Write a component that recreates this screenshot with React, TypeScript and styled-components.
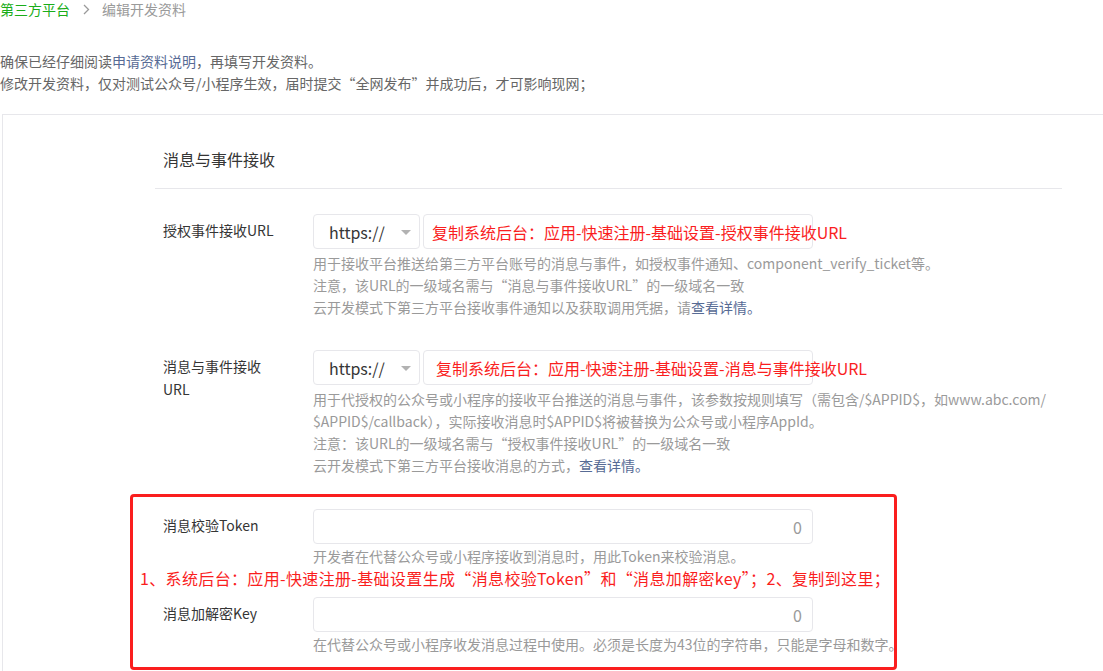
import React from "react";
import styled, { createGlobalStyle } from "styled-components";

const Global = createGlobalStyle`
  html, body { margin: 0; padding: 0; background: #fff; overflow: hidden; }
  body { font-family: "Noto Sans CJK SC", "Noto Sans", sans-serif; color: #353535; }
  * { box-sizing: border-box; }
`;

const Page = styled.div`
  width: 1103px;
  height: 671px;
  overflow: hidden;
`;

const Breadcrumb = styled.div`
  display: flex;
  align-items: center;
  height: 20px;
  font-size: 14px;
  line-height: 20px;
  margin-top: -1px;
`;

const Crumb = styled.span<{ $active?: boolean }>`
  color: ${(p) => (p.$active ? "#1aad19" : "#9a9a9a")};
`;

const Sep = styled.svg`
  width: 7px;
  height: 11px;
  margin: 0 12px 0 13px;
  flex-shrink: 0;
`;

const Intro = styled.div`
  margin-top: 31px;
  font-size: 14px;
  line-height: 22px;
  color: #666;
`;

const Link = styled.span`
  color: #576b95;
`;

const Panel = styled.div`
  margin-top: 20px;
  margin-left: 2px;
  width: 1120px;
  border-top: 1px solid #e7e7eb;
  border-left: 1px solid #e7e7eb;
  padding-left: 152px;
  height: 600px;
`;

const SectionTitle = styled.div`
  width: 907px;
  padding: 32px 0 17px 8px;
  font-size: 16px;
  line-height: 24px;
  color: #353535;
  border-bottom: 1px solid #e7e7eb;
`;

const Form = styled.div`
  padding-top: 25px;
`;

const Row = styled.div<{ $gap?: number }>`
  display: flex;
  align-items: flex-start;
  margin-bottom: ${(p) => p.$gap ?? 0}px;
`;

const Label = styled.div`
  width: 158px;
  flex-shrink: 0;
  padding: 5px 36px 0 8px;
  font-size: 14px;
  line-height: 23px;
  color: #353535;
`;

const Field = styled.div`
  display: flex;
  flex-direction: column;
`;

const Controls = styled.div`
  display: flex;
  gap: 3px;
`;

const Select = styled.div`
  width: 107px;
  height: 35px;
  border: 1px solid #e7e7eb;
  border-radius: 4px;
  display: flex;
  align-items: center;
  justify-content: space-between;
  padding: 0 8px 0 15px;
  font-size: 16px;
  color: #353535;
`;

const Arrow = styled.span`
  width: 0;
  height: 0;
  border-left: 5px solid transparent;
  border-right: 5px solid transparent;
  border-top: 5px solid #b2b2b2;
  margin-top: 1px;
`;

const TextInput = styled.div<{ $width: number; $indent?: number; $right?: boolean }>`
  width: ${(p) => p.$width}px;
  height: 35px;
  border: 1px solid #e7e7eb;
  border-radius: 4px;
  display: flex;
  align-items: center;
  justify-content: ${(p) => (p.$right ? "flex-end" : "flex-start")};
  padding: 0 10px 0 ${(p) => p.$indent ?? 8}px;
  font-size: 16px;
  white-space: nowrap;
`;

const RedText = styled.span`
  color: #fa1e1e;
  font-size: 16px;
`;

const Counter = styled.span`
  color: #9a9a9a;
  font-size: 16px;
`;

const Help = styled.div<{ $mt?: number }>`
  margin-top: ${(p) => p.$mt ?? 3}px;
  font-size: 14px;
  line-height: 22px;
  color: #9a9a9a;
  white-space: nowrap;
`;

const HelpLine = styled.div``;

const HelpLink = styled.span`
  color: #576b95;
`;

const Annotated = styled.div`
  margin-top: 18px;
  margin-left: -25px;
  width: 767px;
  border: 3px solid #fa1e1e;
  border-radius: 4px;
  padding: 12px 0 12px 22px;
`;

const Note = styled.div`
  margin: 0 0 8px -15px;
  font-size: 16px;
  line-height: 22px;
  color: #fa1e1e;
  white-space: nowrap;
  letter-spacing: 0.35px;
`;

export default function App() {
  return (
    <Page>
      <Global />
      <Breadcrumb>
        <Crumb $active>第三方平台</Crumb>
        <Sep viewBox="0 0 7 11">
          <path d="M1 1 L5.5 5.5 L1 10" fill="none" stroke="#9a9a9a" strokeWidth="1.3" />
        </Sep>
        <Crumb>编辑开发资料</Crumb>
      </Breadcrumb>
      <Intro>
        <div>
          确保已经仔细阅读<Link>申请资料说明</Link>，再填写开发资料。
        </div>
        <div>修改开发资料，仅对测试公众号/小程序生效，届时提交“全网发布”并成功后，才可影响现网；</div>
      </Intro>
      <Panel>
        <SectionTitle>消息与事件接收</SectionTitle>
        <Form>
          <Row $gap={32}>
            <Label>授权事件接收URL</Label>
            <Field>
              <Controls>
                <Select>
                  https://
                  <Arrow />
                </Select>
                <TextInput $width={390}>
                  <RedText>复制系统后台：应用-快速注册-基础设置-授权事件接收URL</RedText>
                </TextInput>
              </Controls>
              <Help>
                <HelpLine>用于接收平台推送给第三方平台账号的消息与事件，如授权事件通知、component_verify_ticket等。</HelpLine>
                <HelpLine>注意，该URL的一级域名需与“消息与事件接收URL”的一级域名一致</HelpLine>
                <HelpLine>
                  云开发模式下第三方平台接收事件通知以及获取调用凭据，请<HelpLink>查看详情。</HelpLink>
                </HelpLine>
              </Help>
            </Field>
          </Row>
          <Row>
            <Label>消息与事件接收URL</Label>
            <Field>
              <Controls>
                <Select>
                  https://
                  <Arrow />
                </Select>
                <TextInput $width={390} $indent={12}>
                  <RedText>复制系统后台：应用-快速注册-基础设置-消息与事件接收URL</RedText>
                </TextInput>
              </Controls>
              <Help>
                <HelpLine>用于代授权的公众号或小程序的接收平台推送的消息与事件，该参数按规则填写（需包含/$APPID$，如www.abc.com/</HelpLine>
                <HelpLine>$APPID$/callback），实际接收消息时$APPID$将被替换为公众号或小程序AppId。</HelpLine>
                <HelpLine>注意：该URL的一级域名需与“授权事件接收URL”的一级域名一致</HelpLine>
                <HelpLine>
                  云开发模式下第三方平台接收消息的方式，<HelpLink>查看详情。</HelpLink>
                </HelpLine>
              </Help>
            </Field>
          </Row>
          <Annotated>
            <Row>
              <Label>消息校验Token</Label>
              <Field>
                <TextInput $width={500} $right>
                  <Counter>0</Counter>
                </TextInput>
                <Help $mt={1}>开发者在代替公众号或小程序接收到消息时，用此Token来校验消息。</Help>
              </Field>
            </Row>
            <Note>1、系统后台：应用-快速注册-基础设置生成“消息校验Token”和“消息加解密key”；2、复制到这里；</Note>
            <Row>
              <Label>消息加解密Key</Label>
              <Field>
                <TextInput $width={500} $right>
                  <Counter>0</Counter>
                </TextInput>
                <Help $mt={1}>在代替公众号或小程序收发消息过程中使用。必须是长度为43位的字符串，只能是字母和数字。</Help>
              </Field>
            </Row>
          </Annotated>
        </Form>
      </Panel>
    </Page>
  );
}
